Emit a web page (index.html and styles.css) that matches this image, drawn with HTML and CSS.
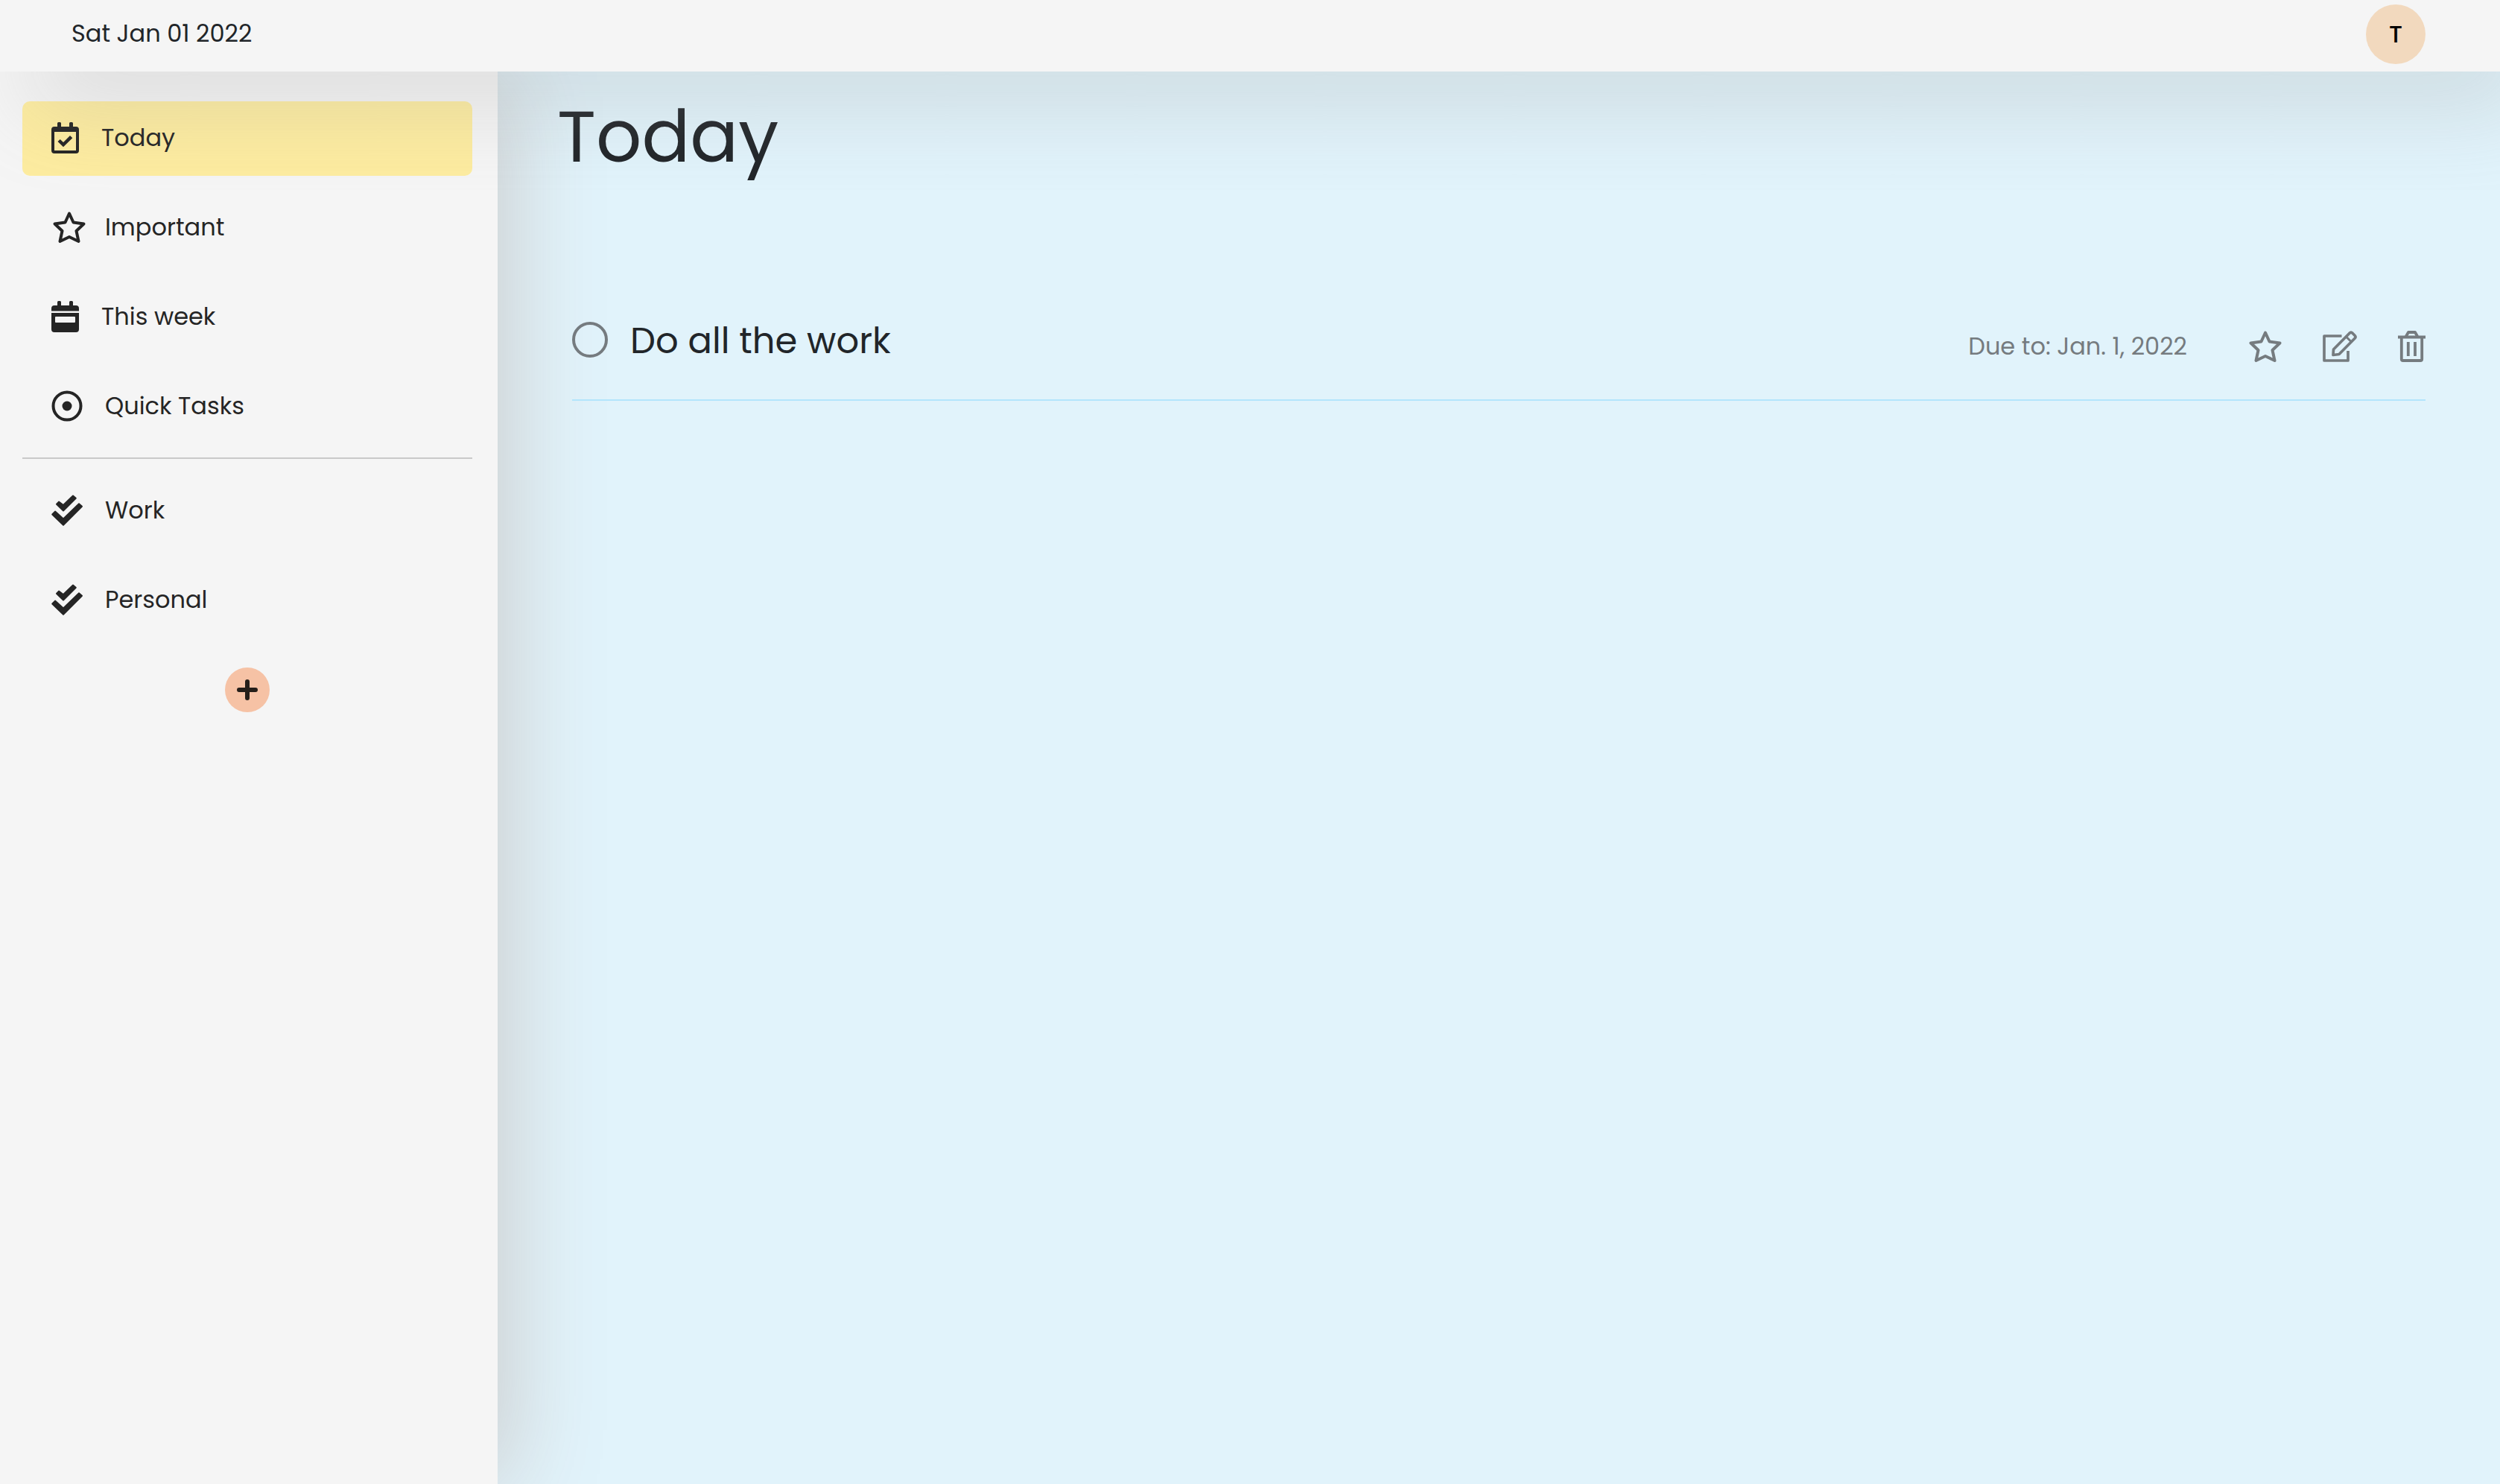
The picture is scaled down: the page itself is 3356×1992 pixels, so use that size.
FILE: index.html
```html
<!DOCTYPE html>
<html lang="en">
<head>
  <meta charset="utf-8">
  <meta name="viewport" content="width=device-width, initial-scale=1">
  <title>Today</title>
  <link rel="stylesheet" href="styles.css">
</head>
<body>
  <header class="topbar">
    <time class="date" datetime="2022-01-01">Sat Jan 01 2022</time>
    <button class="avatar" type="button">T</button>
  </header>
  <div class="layout">
    <aside class="sidebar">
      <nav class="nav">
        <a class="nav-item active" href="#today">
          <svg class="icon" width="37" height="42" viewBox="0 0 37 42" fill="currentColor"><path fill-rule="evenodd" d="M8 6V1.500Q8 0 9.500 0H11.500Q13 0 13 1.500V6H24V1.500Q24 0 25.500 0H27.500Q29 0 29 1.500V6H33Q37 6 37 10V38Q37 42 33 42H4Q0 42 0 38V10Q0 6 4 6ZM4 13V38H33V13Z"/><path d="M8.500 26L11.700 23L16 27L25 18L28.300 21.200L16 33.300Z"/></svg>
          Today
        </a>
        <a class="nav-item" href="#important">
          <svg class="icon" width="42" height="42" viewBox="-2 0 42 42" fill="none" stroke="currentColor" stroke-width="4" stroke-linejoin="round"><path d="M22 2.500L27.500 14.500L41.500 16.500L31.500 26L34.500 40L22 34L9.500 40L12.500 26L2.500 16.500L16.500 14.500Z"/></svg>
          Important
        </a>
        <a class="nav-item" href="#week">
          <svg class="icon" width="37" height="42" viewBox="0 0 37 42" fill="currentColor"><path d="M8 6V1.500Q8 0 9.500 0H11.500Q13 0 13 1.500V6H24V1.500Q24 0 25.500 0H27.500Q29 0 29 1.500V6H33Q37 6 37 10V13.500H0V10Q0 6 4 6Z"/><path fill-rule="evenodd" d="M0 16H37V38Q37 42 33 42H4Q0 42 0 38ZM6 21Q5 21 5 22V28Q5 29 6 29H31Q32 29 32 28V22Q32 21 31 21Z"/></svg>
          This week
        </a>
        <a class="nav-item" href="#quick">
          <svg class="icon" width="42" height="42" viewBox="0 0 42 42"><circle cx="21" cy="21" r="18.500" fill="none" stroke="currentColor" stroke-width="4"/><circle cx="21" cy="21" r="6.500" fill="currentColor"/></svg>
          Quick Tasks
        </a>
      </nav>
      <nav class="nav lists">
        <a class="nav-item" href="#work">
          <svg class="icon" width="42" height="42" viewBox="0 0 42 42" fill="currentColor" stroke="currentColor" stroke-width="2" stroke-linejoin="round"><path d="M7 12.700L10 9.600L16 14L29 1.500L32.800 4.700L16 21.500Z"/><path d="M1.200 26.500L5 22.600L16 32.500L37 12.200L41 15.700L16 40.800Z"/></svg>
          Work
        </a>
        <a class="nav-item" href="#personal">
          <svg class="icon" width="42" height="42" viewBox="0 0 42 42" fill="currentColor" stroke="currentColor" stroke-width="2" stroke-linejoin="round"><path d="M7 12.700L10 9.600L16 14L29 1.500L32.800 4.700L16 21.500Z"/><path d="M1.200 26.500L5 22.600L16 32.500L37 12.200L41 15.700L16 40.800Z"/></svg>
          Personal
        </a>
      </nav>
      <button class="add" type="button" aria-label="Add list">
        <svg class="icon" width="28" height="28" viewBox="0 0 28 28" fill="none" stroke="currentColor" stroke-width="6" stroke-linecap="round"><path d="M14 3V25M3 14H25"/></svg>
      </button>
    </aside>
    <main class="main">
      <h1 class="title">Today</h1>
      <ul class="tasks">
        <li class="task">
          <label class="task-name"><input class="check" type="checkbox"><span class="task-text">Do all the work</span></label>
          <div class="task-side">
            <span class="due">Due to: Jan. 1, 2022</span>
            <button class="action" type="button" aria-label="Mark important">
              <svg class="icon" width="44" height="42" viewBox="0 0 44 42" fill="none" stroke="currentColor" stroke-width="4" stroke-linejoin="round"><path d="M22 2.500L27.500 14.500L41.500 16.500L31.500 26L34.500 40L22 34L9.500 40L12.500 26L2.500 16.500L16.500 14.500Z"/></svg>
            </button>
            <button class="action" type="button" aria-label="Edit">
              <svg class="icon" width="46" height="42" viewBox="0 0 46 42" fill="none" stroke="currentColor" stroke-width="3.700" stroke-linejoin="round"><path d="M25.500 7H2V40H34V27"/><path d="M14 32.500L14.500 25L36 3.200Q38 1.300 40 3.200L43 6.200Q45 8.200 43 10.200L22 31.500Z"/><path d="M31.500 8L38.500 15" stroke-width="3"/></svg>
            </button>
            <button class="action" type="button" aria-label="Delete">
              <svg class="icon" width="37" height="42" viewBox="0 0 37 42" fill="none" stroke="currentColor" stroke-width="3.800" stroke-linejoin="round"><path d="M0 8.500H37M10.500 8L14 2H23L26.500 8M4.800 9V38Q4.800 40 6.800 40H30.200Q32.200 40 32.200 38V9M13.800 15V34M23 15V34"/></svg>
            </button>
          </div>
        </li>
      </ul>
    </main>
  </div>
</body>
</html>
```
FILE: styles.css
```css
* {
  box-sizing: border-box;
}

body {
  margin: 0;
  min-height: 100vh;
  display: flex;
  flex-direction: column;
  background: #e1f3fb;
  color: #212529;
  font-family: Poppins, Inter, "Open Sans", sans-serif;
  font-size: 32px;
  overflow-x: hidden;
}

button {
  padding: 0;
  border: 0;
  background: none;
  color: inherit;
  font: inherit;
}

.icon {
  display: block;
  flex: none;
  overflow: visible;
}

/* Top bar */
.topbar {
  position: relative;
  z-index: 2;
  display: flex;
  justify-content: space-between;
  align-items: flex-start;
  height: 96px;
  padding: 6px 100px 0 96px;
  background: #f5f5f5;
  box-shadow: 40px 40px 120px rgba(150, 150, 150, 0.3);
}

.date {
  line-height: 78px;
}

.avatar {
  width: 80px;
  height: 80px;
  border-radius: 50%;
  background: #f2d9be;
  color: #000;
  font-weight: 500;
  line-height: 80px;
}

/* Sidebar */
.layout {
  flex: 1;
  display: flex;
}

.sidebar {
  flex: none;
  width: 668px;
  padding: 40px 34px 40px 30px;
  background: #f5f5f5;
  box-shadow: 12px 0 124px #cbcbcb;
}

.nav {
  display: flex;
  flex-direction: column;
  gap: 20px;
}

.nav-item {
  display: flex;
  align-items: center;
  gap: 30px;
  height: 100px;
  padding: 0 39px 2px;
  border-radius: 10px;
  color: #252525;
  text-decoration: none;
}

.nav-item.active {
  background: #fdeca0;
}

.lists {
  margin-top: 18px;
  padding-top: 20px;
  border-top: 2px solid #c9c9c9;
}

.add {
  display: grid;
  place-items: center;
  width: 60px;
  height: 60px;
  margin: 40px auto 0;
  border-radius: 50%;
  background: #f6c2a5;
  color: #251e19;
}

/* Task list */
.main {
  flex: 1;
  position: relative;
  padding: 28px 100px 40px 80px;
}

.title {
  margin: 0;
  font-size: 96px;
  font-weight: 400;
  line-height: 120px;
}

.tasks {
  margin: 176px 0 0 20px;
  padding: 0;
  list-style: none;
}

.task {
  display: flex;
  justify-content: space-between;
  align-items: flex-end;
  padding-bottom: 44px;
  border-bottom: 2px solid #b3e5fc;
}

.task-name {
  display: flex;
  align-items: center;
  gap: 30px;
  height: 72px;
  font-size: 48px;
}

.task-text {
  padding-top: 4px;
  line-height: 68px;
}

.check {
  appearance: none;
  width: 48px;
  height: 48px;
  margin: 0;
  border: 4px solid #757b7f;
  border-radius: 50%;
}

.task-side {
  display: flex;
  align-items: center;
  gap: 55px;
  height: 54px;
  color: #757b7f;
}

.due {
  margin-right: 28px;
}
```
